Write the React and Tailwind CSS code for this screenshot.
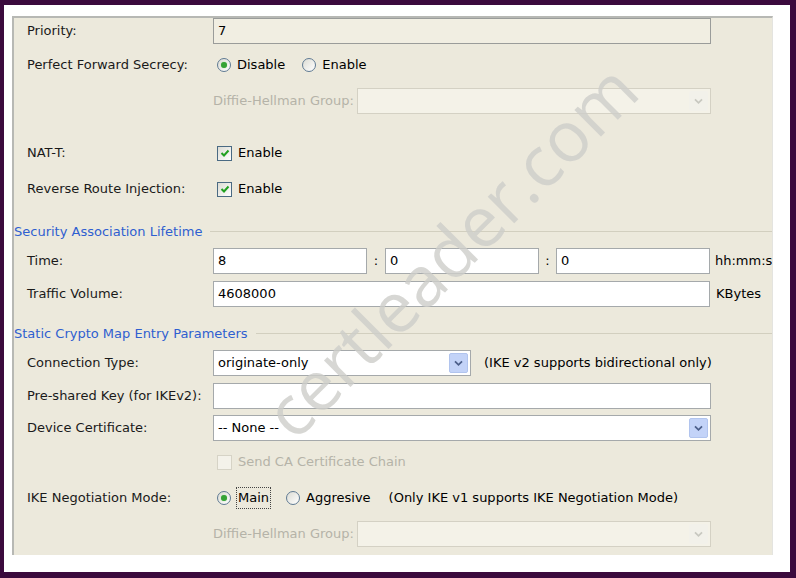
import React from 'react';

const font = 'font-["DejaVu_Sans",sans-serif]';

const Radio = ({ checked }) => (
  <span className="relative inline-flex h-[14px] w-[14px] shrink-0 items-center justify-center rounded-full border border-[#5f7a93] bg-gradient-to-br from-[#dcdcd4] to-white">
    {checked && <span className="h-[6px] w-[6px] rounded-full bg-[#36a336] shadow-[0_0_1px_#8ad38a]" />}
  </span>
);

const Checkbox = ({ checked, disabled }) => (
  <span
    className={`inline-flex h-[15px] w-[15px] shrink-0 items-center justify-center border ${
      disabled ? 'border-[#d6d3c6] bg-[#f4f2ea]' : 'border-[#4a6a83] bg-gradient-to-br from-[#dcdcd4] to-white'
    }`}
  >
    {checked && (
      <svg viewBox="0 0 10 10" className="h-[10px] w-[10px]">
        <path d="M1.5 5 L4 7.5 L8.5 2.5" fill="none" stroke="#21a121" strokeWidth="2" />
      </svg>
    )}
  </span>
);

const TextBox = ({ value, width = 'flex-1', disabled }) => (
  <div
    className={`flex h-[26px] shrink-0 items-center border pl-[4px] text-[13px] text-black ${width} ${
      disabled ? 'border-[#9a9c9a] bg-[#f1eee2]' : 'border-[#a5a9ab] bg-white'
    }`}
  >
    {value}
  </div>
);

const Arrow = ({ disabled }) => (
  <span
    className={`flex h-[20px] w-[19px] shrink-0 items-center justify-center rounded-[2px] ${
      disabled ? 'bg-[#f2f1ea]' : 'bg-[#c3d3f8] border border-[#b1c4ee]'
    }`}
  >
    <svg viewBox="0 0 10 8" className="h-[7px] w-[9px]">
      <path d="M1 1.5 L5 5.5 L9 1.5" fill="none" stroke={disabled ? '#c8c8c0' : '#4c5f8a'} strokeWidth="2" />
    </svg>
  </span>
);

const Select = ({ value, width = 'flex-1', disabled }) => (
  <div
    className={`flex h-[26px] items-center justify-between border pl-[4px] pr-[2px] text-[13px] ${width} ${
      disabled ? 'border-[#d4d1c4] bg-[#f4f2e8]' : 'border-[#a5a9ab] bg-white text-black'
    }`}
  >
    <span className="overflow-hidden whitespace-nowrap">{value}</span>
    <Arrow disabled={disabled} />
  </div>
);

const Row = ({ label, className = '', children }) => (
  <div className={`flex h-[26px] items-center ${className}`}>
    <div className="w-[186px] shrink-0 whitespace-nowrap text-[13px] text-[#1a1a1a]">{label}</div>
    <div className="flex flex-1 items-center pr-[61px]">{children}</div>
  </div>
);

const Section = ({ title, className = '' }) => (
  <div className={`-ml-[14px] flex h-[20px] items-center ${className}`}>
    <span className="pl-[1px] text-[13px] text-[#2f5fd0]">{title}</span>
    <span className="ml-[8px] h-[2px] flex-1 border-t border-[#d2cfbf] border-b-white" />
  </div>
);

const DhGroup = ({ className = '' }) => (
  <div className={`flex h-[26px] items-center pl-[186px] pr-[61px] ${className}`}>
    <span className="w-[144px] whitespace-nowrap text-[13px] text-[#b5b3a8]">Diffie-Hellman Group:</span>
    <Select value="" disabled />
  </div>
);

export default function App() {
  return (
    <div className={`relative h-[578px] w-[796px] bg-[#3b0a3d] pb-[6px] pl-[4px] pr-[6px] pt-[5px] ${font}`}>
      <div className="h-full w-full bg-white pb-[17px] pl-[8px] pr-[17px] pt-[11px]">
        <div className="h-full w-full overflow-hidden border-l-[2px] border-t-[2px] border-r border-[#b7b8b4] border-r-[#e4e4e0] bg-[#ece9dc] pl-[13px]">
          <Row label="Priority:">
            <TextBox value="7" width="flex-1" disabled />
          </Row>

          <Row label="Perfect Forward Secrecy:" className="mt-[8px]">
            <label className="ml-[4px] flex items-center gap-[6px] text-[13px]">
              <Radio checked />
              Disable
            </label>
            <label className="ml-[17px] flex items-center gap-[6px] text-[13px]">
              <Radio />
              Enable
            </label>
          </Row>

          <DhGroup className="mt-[10px]" />

          <Row label="NAT-T:" className="mt-[26px]">
            <span className="ml-[4px] flex items-center gap-[6px] text-[13px]">
              <Checkbox checked />
              Enable
            </span>
          </Row>

          <Row label="Reverse Route Injection:" className="mt-[10px]">
            <span className="ml-[4px] flex items-center gap-[6px] text-[13px]">
              <Checkbox checked />
              Enable
            </span>
          </Row>

          <Section title="Security Association Lifetime" className="mt-[20px]" />

          <div className="mt-[6px] flex h-[26px] items-center">
            <div className="w-[186px] shrink-0 text-[13px] text-[#1a1a1a]">Time:</div>
            <TextBox value="8" width="w-[154px]" />
            <span className="w-[18px] shrink-0 text-center text-[13px]">:</span>
            <TextBox value="0" width="w-[154px]" />
            <span className="w-[17px] shrink-0 text-center text-[13px]">:</span>
            <TextBox value="0" width="w-[154px]" />
            <span className="ml-[5px] shrink-0 whitespace-nowrap text-[13px]">hh:mm:ss</span>
          </div>

          <div className="mt-[7px] flex h-[26px] items-center">
            <div className="w-[186px] shrink-0 text-[13px] text-[#1a1a1a]">Traffic Volume:</div>
            <TextBox value="4608000" width="w-[497px]" />
            <span className="ml-[6px] text-[13px]">KBytes</span>
          </div>

          <Section title="Static Crypto Map Entry Parameters" className="mt-[17px]" />

          <Row label="Connection Type:" className="mt-[6px]">
            <Select value="originate-only" width="w-[258px]" />
            <span className="ml-[13px] whitespace-nowrap text-[13px]">(IKE v2 supports bidirectional only)</span>
          </Row>

          <Row label="Pre-shared Key (for IKEv2):" className="mt-[7px]">
            <TextBox value="" width="flex-1" />
          </Row>

          <Row label="Device Certificate:" className="mt-[6px]">
            <Select value="-- None --" />
          </Row>

          <Row label="" className="mt-[8px]">
            <span className="ml-[4px] flex items-center gap-[6px] text-[13px] text-[#b5b3a8]">
              <Checkbox disabled />
              Send CA Certificate Chain
            </span>
          </Row>

          <Row label="IKE Negotiation Mode:" className="mt-[10px]">
            <label className="ml-[4px] flex items-center gap-[6px] text-[13px]">
              <Radio checked />
              <span className="px-[1px] outline-1 outline-dotted outline-[#444]">Main</span>
            </label>
            <label className="ml-[16px] flex items-center gap-[6px] text-[13px]">
              <Radio />
              Aggresive
            </label>
            <span className="ml-[18px] whitespace-nowrap text-[13px]">(Only IKE v1 supports IKE Negotiation Mode)</span>
          </Row>

          <DhGroup className="mt-[10px]" />
        </div>
      </div>

      {/* diagonal site watermark */}
      <div className="pointer-events-none absolute left-[450px] top-[250px] -translate-x-1/2 -translate-y-1/2 -rotate-45 whitespace-nowrap font-['Open_Sans',sans-serif] text-[70px] font-normal text-[#cdcdc9]/80">
        certleader.com
      </div>
    </div>
  );
}
